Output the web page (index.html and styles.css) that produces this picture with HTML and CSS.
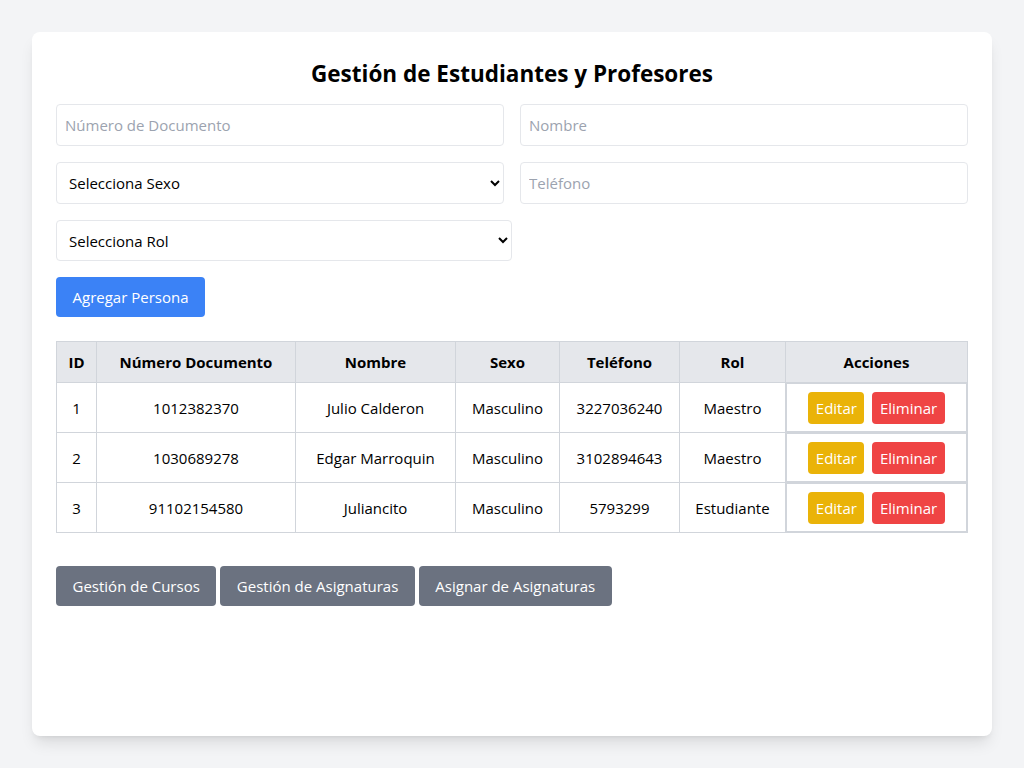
FILE: index.html
```html
<!DOCTYPE html>
<html lang="es">
<head>
<meta charset="utf-8">
<title>Gestión de Estudiantes y Profesores</title>
<link rel="stylesheet" href="styles.css">
</head>
<body>
<div class="card">
  <h1 class="title">Gestión de Estudiantes y Profesores</h1>
  <div class="form-grid">
    <input class="field" type="text" placeholder="Número de Documento">
    <input class="field" type="text" placeholder="Nombre">
    <select class="field select">
      <option>Selecciona Sexo</option>
    </select>
    <input class="field" type="text" placeholder="Teléfono">
  </div>
  <select class="field select half">
    <option>Selecciona Rol</option>
  </select>
  <button class="btn btn-blue">Agregar Persona</button>

  <table class="table">
    <colgroup>
      <col class="c-id">
      <col class="c-doc">
      <col class="c-name">
      <col class="c-sex">
      <col class="c-tel">
      <col class="c-rol">
      <col class="c-act">
    </colgroup>
    <thead>
      <tr>
        <th>ID</th><th>Número Documento</th><th>Nombre</th><th>Sexo</th><th>Teléfono</th><th>Rol</th><th>Acciones</th>
      </tr>
    </thead>
    <tbody>
      <tr>
        <td>1</td><td>1012382370</td><td>Julio Calderon</td><td>Masculino</td><td>3227036240</td><td>Maestro</td>
        <td class="actions"><div class="action-wrap"><button class="sbtn yellow">Editar</button><button class="sbtn red">Eliminar</button></div></td>
      </tr>
      <tr>
        <td>2</td><td>1030689278</td><td>Edgar Marroquin</td><td>Masculino</td><td>3102894643</td><td>Maestro</td>
        <td class="actions"><div class="action-wrap"><button class="sbtn yellow">Editar</button><button class="sbtn red">Eliminar</button></div></td>
      </tr>
      <tr>
        <td>3</td><td>91102154580</td><td>Juliancito</td><td>Masculino</td><td>5793299</td><td>Estudiante</td>
        <td class="actions"><div class="action-wrap"><button class="sbtn yellow">Editar</button><button class="sbtn red">Eliminar</button></div></td>
      </tr>
    </tbody>
  </table>

  <div class="nav">
    <button class="btn btn-gray">Gestión de Cursos</button>
    <button class="btn btn-gray">Gestión de Asignaturas</button>
    <button class="btn btn-gray">Asignar de Asignaturas</button>
  </div>
</div>
</body>
</html>
```
FILE: styles.css
```css
* { box-sizing: border-box; }
html, body { margin: 0; padding: 0; }
body {
  background: #f3f4f6;
  font-family: "Open Sans", "Noto Sans", sans-serif;
  font-size: 15px;
  line-height: 24px;
  color: #000;
  padding: 32px;
}
.card {
  background: #fff;
  border-radius: 8px;
  box-shadow: 0 10px 15px -3px rgba(0,0,0,0.1), 0 4px 6px -4px rgba(0,0,0,0.1);
  padding: 24px;
  height: 704px;
}
.title {
  margin: 0 0 12px;
  font-size: 22.5px;
  line-height: 36px;
  font-weight: 700;
  text-align: center;
}
.form-grid {
  display: grid;
  grid-template-columns: 1fr 1fr;
  gap: 16px;
  margin-bottom: 16px;
}
.field {
  display: block;
  width: 100%;
  height: 42px;
  font: inherit;
  padding: 8px;
  border: 1px solid #e5e7eb;
  border-radius: 4px;
  background: #fff;
  color: #000;
  outline: none;
}
.field::placeholder { color: #9ca3af; }
.half { width: 456px; height: 41px; margin-bottom: 16px; }
.btn {
  font: inherit;
  color: #fff;
  border: none;
  border-radius: 4px;
  height: 40px;
  padding: 8px 16px;
  cursor: pointer;
}
.btn-blue { background: #3b82f6; padding: 8px 16.5px; }
.btn-gray { background: #6b7280; padding: 8px 16.5px; }
.table {
  margin-top: 24px;
  width: 911px;
  table-layout: fixed;
  border-collapse: collapse;
  border: 1px solid #d1d5db;
}
.c-id { width: 40px; }
.c-doc { width: 199px; }
.c-name { width: 160px; }
.c-sex { width: 104px; }
.c-tel { width: 120px; }
.c-rol { width: 106px; }
.c-act { width: 182px; }
.table th, .table td {
  border: 1px solid #d1d5db;
  text-align: center;
  padding: 8px;
  white-space: nowrap;
}
.table th {
  background: #e5e7eb;
  font-weight: 700;
}
.table td { height: 50px; }
.table td.actions { padding: 0; }
.action-wrap {
  display: flex;
  justify-content: center;
  align-items: center;
  gap: 8px;
  padding: 8px;
  border: 1px solid #d1d5db;
  height: 49px;
}
.sbtn {
  font: inherit;
  color: #fff;
  border: none;
  border-radius: 4px;
  height: 32px;
  padding: 4px 7.5px;
}
.yellow { background: #eab308; }
.red { background: #ef4444; }
.nav {
  margin-top: 33px;
  display: flex;
  gap: 4px;
}
```
